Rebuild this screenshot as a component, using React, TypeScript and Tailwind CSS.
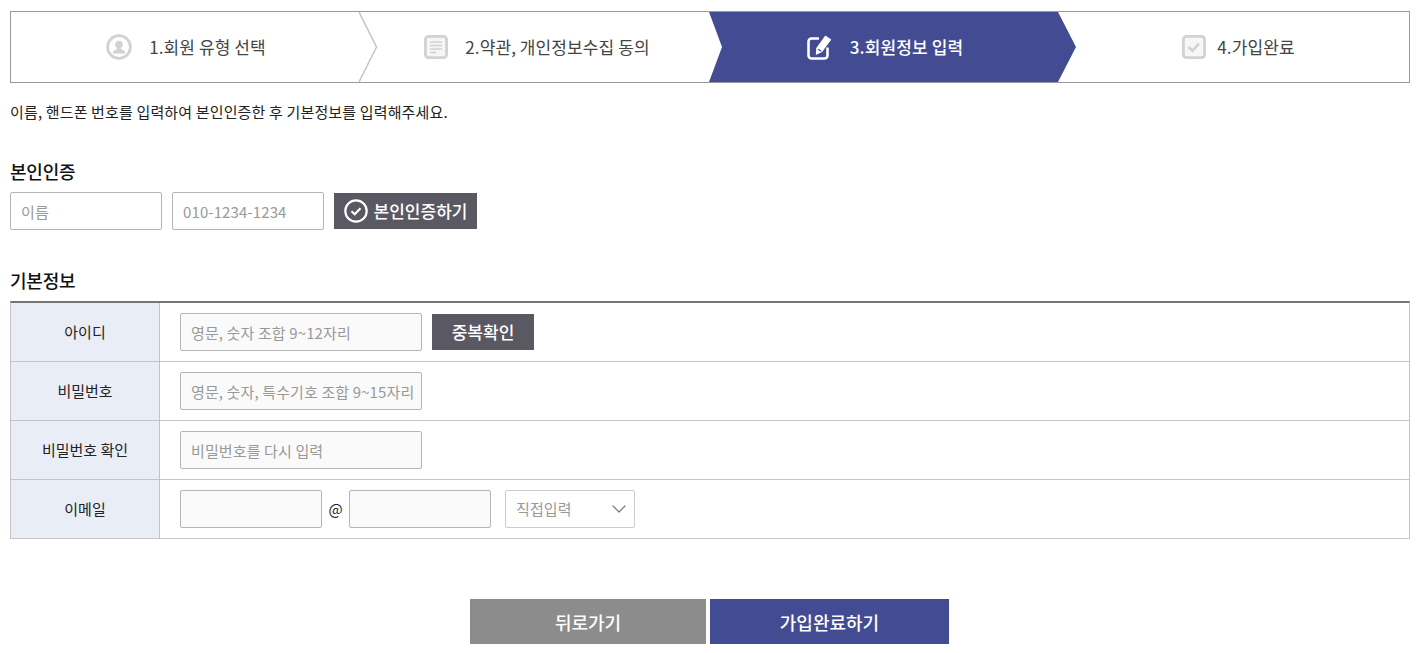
import { ChevronDown } from 'lucide-react';

const font = '[font-family:"Noto_Sans_CJK_KR","Noto_Sans",sans-serif]';

function UserIcon() {
  return (
    <svg width="26" height="26" viewBox="0 0 26 26" fill="none">
      <circle cx="13" cy="13" r="11.4" stroke="#d2d2d2" strokeWidth="2.8" />
      <circle cx="13" cy="10.5" r="3.8" fill="#d2d2d2" />
      <path d="M11.5 13h3l.8 2.2 2.7 1.2c.6.3 1 .9 1 1.6v1.5H7V18c0-.7.4-1.3 1-1.6l2.7-1.2z" fill="#d2d2d2" />
    </svg>
  );
}

function DocIcon() {
  return (
    <svg width="24" height="24" viewBox="0 0 24 24" fill="none">
      <rect x="1.4" y="1.4" width="21.2" height="21.2" rx="3" stroke="#d2d2d2" strokeWidth="2.8" fill="#f5f5f5" />
      <path d="M6 7h12M6 10.5h12M6 14h12M6 17.5h6" stroke="#d2d2d2" strokeWidth="1.5" />
    </svg>
  );
}

function EditIcon() {
  return (
    <svg width="25" height="25" viewBox="0 0 25 25" fill="none">
      <path d="M12 3.5H4.5a3 3 0 0 0-3 3v14a3 3 0 0 0 3 3h13a3 3 0 0 0 3-3v-8" stroke="#fff" strokeWidth="2.6" />
      <path d="M18.3 0.5l6 4-9.2 12.6-6.3 2.8.5-6.8z" fill="#fff" />
      <path d="M11.2 14.2l3 2" stroke="#434c93" strokeWidth="1.3" />
    </svg>
  );
}

function CheckBoxIcon() {
  return (
    <svg width="24" height="24" viewBox="0 0 24 24" fill="none">
      <rect x="1.4" y="1.4" width="21.2" height="21.2" rx="3" stroke="#d2d2d2" strokeWidth="2.8" fill="#f7f7f7" />
      <path d="M6.5 12l4 3.6 6.5-7" stroke="#d2d2d2" strokeWidth="2.6" />
    </svg>
  );
}

function Arrow() {
  return (
    <svg className="absolute top-0 left-[347px]" width="20" height="70" viewBox="0 0 20 70" fill="none">
      <path d="M1 0l17.5 35L1 70" stroke="#c4c4c4" strokeWidth="1.5" />
    </svg>
  );
}

function Field({ placeholder = '', w = 'w-[242px]', white = false }: { placeholder?: string; w?: string; white?: boolean }) {
  return (
    <input
      readOnly
      placeholder={placeholder}
      className={`${w} h-[38px] rounded-[2px] border border-[#b5b5b5] pl-[10px] pr-[4px] text-[15px] tracking-[0.12px] text-[#333] placeholder:text-[#999] outline-none ${white ? 'bg-white' : 'bg-[#fafafa]'}`}
    />
  );
}

function Row({ label, children, last = false }: { label: string; children: React.ReactNode; last?: boolean }) {
  return (
    <div className={`flex ${last ? 'h-[58px]' : 'h-[59px] border-b border-[#c4c4c4]'}`}>
      <div className="flex w-[149px] shrink-0 items-center justify-center border-r border-[#c4c4c4] bg-[#e9edf6] text-[15px] text-[#222]">
        {label}
      </div>
      <div className="flex flex-1 items-center pl-5">{children}</div>
    </div>
  );
}

export default function App() {
  return (
    <div className={`${font} h-[653px] w-[1410px] bg-white pl-[10px] pt-[11px] overflow-hidden`}>
      {/* steps */}
      <div className="relative flex h-[72px] border border-[#999] text-[17px] tracking-[0.1px] text-[#444]">
        <div className="flex w-[349px] items-center justify-center gap-[17px] pl-[1px]">
          <UserIcon />
          <span>1.회원 유형 선택</span>
        </div>
        <Arrow />
        <div className="flex w-[349px] items-center justify-center gap-[17px] pl-[5px]">
          <DocIcon />
          <span>2.약관, 개인정보수집 동의</span>
        </div>
        <div className="flex w-[367px] items-center justify-center gap-[18px] bg-[#434c93] pr-[15px] font-medium text-white [clip-path:polygon(0_0,349px_0,100%_50%,349px_100%,0_100%,13px_50%)]">
          <EditIcon />
          <span>3.회원정보 입력</span>
        </div>
        <div className="flex flex-1 items-center justify-center gap-[11px] pr-[8px]">
          <CheckBoxIcon />
          <span>4.가입완료</span>
        </div>
      </div>

      <p className="mt-[19px] text-[15px] leading-5 tracking-[0.15px] text-[#222]">이름, 핸드폰 번호를 입력하여 본인인증한 후 기본정보를 입력해주세요.</p>

      <h3 className="mt-[37px] text-[18px] leading-6 font-medium tracking-[-0.2px] text-[#111]">본인인증</h3>
      <div className="mt-[9px] flex items-center gap-[10px]">
        <Field placeholder="이름" w="w-[152px]" white />
        <Field placeholder="010-1234-1234" w="w-[152px]" white />
        <button className="flex h-9 w-[143px] items-center justify-center gap-[6px] bg-[#5a5862] text-[17px] font-medium text-white">
          <svg width="24" height="24" viewBox="0 0 24 24" fill="none">
            <circle cx="12" cy="12" r="10.7" stroke="#fff" strokeWidth="2.2" />
            <path d="M7.5 12.3l3.2 3 5.8-6" stroke="#fff" strokeWidth="2.2" />
          </svg>
          본인인증하기
        </button>
      </div>

      <h3 className="mt-[38px] text-[18px] leading-6 font-medium tracking-[-0.2px] text-[#111]">기본정보</h3>
      <div className="mt-[9px] border-x border-b border-t-2 border-x-[#c4c4c4] border-b-[#c4c4c4] border-t-[#757575]">
        <Row label="아이디">
          <Field placeholder="영문, 숫자 조합 9~12자리" />
          <button className="ml-[10px] h-9 w-[102px] bg-[#5a5862] text-[17px] font-medium text-white">중복확인</button>
        </Row>
        <Row label="비밀번호">
          <Field placeholder="영문, 숫자, 특수기호 조합 9~15자리" />
        </Row>
        <Row label="비밀번호 확인">
          <Field placeholder="비밀번호를 다시 입력" />
        </Row>
        <Row label="이메일" last>
          <Field w="w-[142px]" />
          <span className="w-[27px] text-center text-[15px] text-[#222]">@</span>
          <Field w="w-[142px]" />
          <div className="ml-[14px] flex h-[38px] w-[130px] items-center justify-between rounded-[2px] border border-[#ccc] bg-white pl-[10px] pr-[3px] text-[15px] tracking-[0.12px] text-[#999]">
            직접입력
            <ChevronDown size={24} strokeWidth={1.2} className="text-[#777]" />
          </div>
        </Row>
      </div>

      <div className="mt-[60px] flex justify-center gap-1 pr-[1px] text-lg font-medium text-white">
        <button className="h-[45px] w-[236px] bg-[#8c8c8c]">뒤로가기</button>
        <button className="h-[45px] w-[239px] bg-[#434c93]">가입완료하기</button>
      </div>
    </div>
  );
}
